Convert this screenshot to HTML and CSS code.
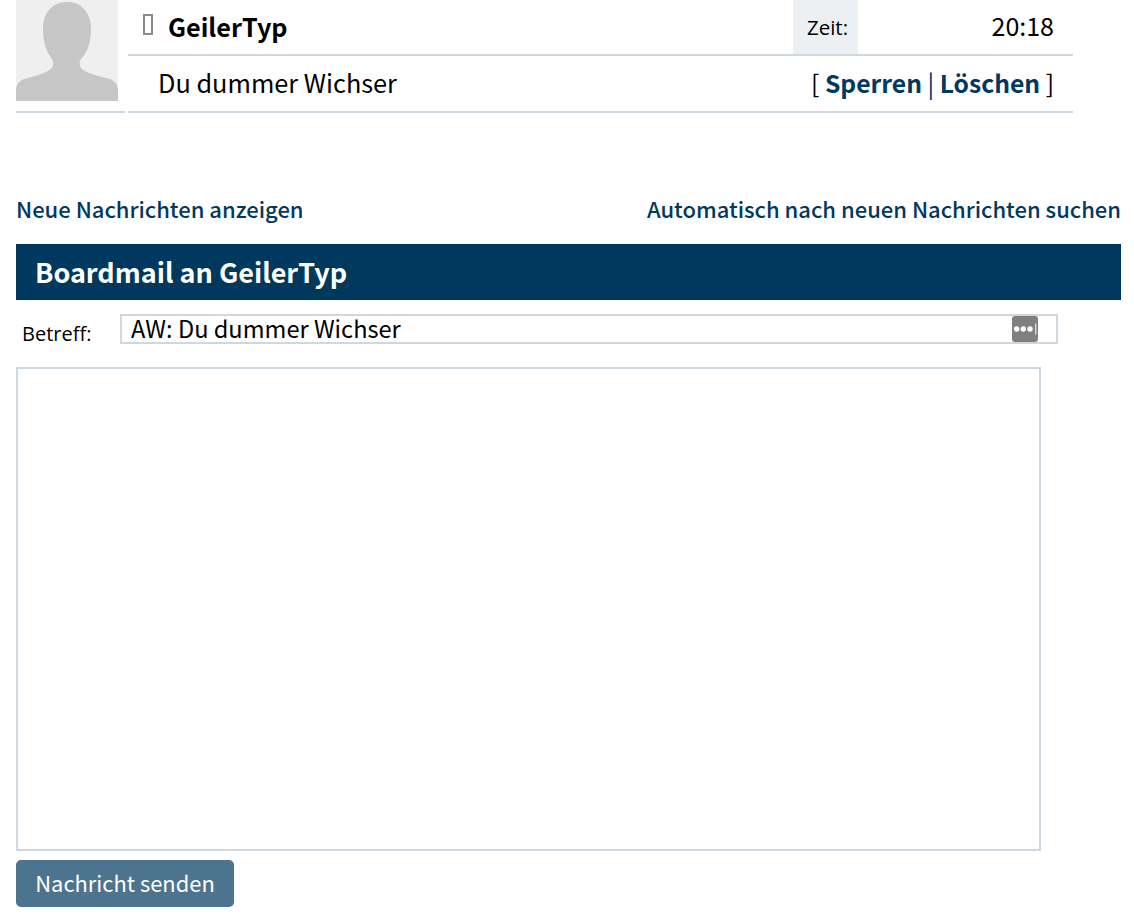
FILE: index.html
```html
<!DOCTYPE html>
<html lang="de">
<head>
<meta charset="utf-8">
<title>Boardmail</title>
<link rel="stylesheet" href="styles.css">
</head>
<body>
<div class="page">
  <section class="message">
    <div class="avatar-col">
      <svg class="avatar" viewBox="0 0 102 101" aria-hidden="true">
        <rect width="102" height="101" fill="#efefef"/>
        <path fill="#c6c6c6" d="M51 2C37 2 27 12 27 29C27 43 31 53 36 59C38 62 38 66 35 69C28 74 16 77 8 79C3 81 0 85 0 91V101H102V91C102 85 99 81 94 79C86 77 72 74 66 69C63 66 63 62 65 59C71 53 75 43 75 29C75 12 65 2 51 2Z"/>
      </svg>
    </div>
    <div class="msg-main">
      <div class="row row-head">
        <div class="author"><span class="tofu"></span><strong>GeilerTyp</strong></div>
        <div class="time-label">Zeit:</div>
        <div class="time-value">20:18</div>
      </div>
      <div class="row row-body">
        <div class="text">Du dummer Wichser</div>
        <div class="actions">[ <a href="#">Sperren</a> <span class="sep">|</span> <a href="#">Löschen</a> ]</div>
      </div>
    </div>
  </section>

  <nav class="links">
    <a href="#">Neue Nachrichten anzeigen</a>
    <a href="#">Automatisch nach neuen Nachrichten suchen</a>
  </nav>

  <h2 class="bar">Boardmail an GeilerTyp</h2>

  <form class="form">
    <div class="subject-row">
      <label class="subject-label" for="subject">Betreff:</label>
      <div class="subject-box">
        <input id="subject" class="subject-input" type="text" value="AW: Du dummer Wichser">
        <svg class="dots" viewBox="0 0 26 26" aria-hidden="true">
          <rect width="26" height="26" rx="3" fill="#808080"/>
          <circle cx="4.7" cy="13" r="2.7" fill="#fff"/>
          <circle cx="11.3" cy="13" r="2.7" fill="#fff"/>
          <circle cx="18" cy="13" r="2.7" fill="#fff"/>
          <rect x="23.3" y="7.5" width="1" height="11" fill="#fff"/>
        </svg>
      </div>
    </div>
    <textarea class="body-input"></textarea>
    <button class="send" type="button">Nachricht senden</button>
  </form>
</div>
</body>
</html>
```
FILE: styles.css
```css
* { box-sizing: border-box; }
html, body { margin: 0; padding: 0; background: #fff; }
body {
  font-family: "Noto Sans CJK SC", "Noto Sans", sans-serif;
  color: #000;
}
a { color: #00395d; text-decoration: none; font-weight: 500; }
.page { padding: 0 13px 0 16px; }

.message { display: flex; align-items: flex-start; width: 1057px; }
.avatar-col { width: 109px; height: 113px; border-bottom: 2px solid #cdd8e0; flex: none; margin-right: 3px; }
.avatar { display: block; width: 102px; height: 101px; }
.msg-main { flex: 1; }
.row { display: flex; border-bottom: 2px solid #cdd8e0; }
.row-head { height: 56px; }
.row-body { height: 57px; align-items: center; justify-content: space-between; padding: 0 19px 3px 30px; font-size: 25.3px; line-height: 30px; }
.author { flex: 1; display: flex; align-items: center; padding-left: 15px; font-size: 25.2px; line-height: 30px; padding-bottom: 2px; }
.author strong { font-weight: 700; }
.tofu { width: 10px; height: 21px; border: 2px solid #8a8a8a; margin-right: 15px; margin-top: -4px; }
.time-label {
  width: 65px; background: #edf0f3; padding-left: 4px; text-align: center;
  font-family: "Open Sans", sans-serif; font-size: 20.5px; line-height: 54px;
}
.time-value { width: 215px; text-align: right; padding: 0 19px 0 0; font-size: 25px; line-height: 50px; }
.actions { font-size: 24.7px; }
.actions a { font-weight: 700; }
.sep { color: #002a70; }

.links { display: flex; justify-content: space-between; margin-top: 80px; font-size: 22px; line-height: 30px; }
.bar { margin: 21px 0 0; height: 56px; background: #00395d; color: #fff; font-size: 27px; font-weight: 700; line-height: 56px; padding: 0 0 2px 19px; }

.form { display: block; }
.subject-row { display: flex; align-items: flex-start; margin-top: 14px; }
.subject-label { width: 104px; padding: 6px 0 0 6px; font-family: "Open Sans", sans-serif; font-size: 20px; line-height: 28px; }
.subject-box { position: relative; width: 938px; height: 30px; border: 2px solid #cdd8e0; }
.subject-input { display: block; width: 100%; height: 100%; border: 0; padding: 0 40px 2px 9px; background: transparent; font: 400 23.6px/26px "Noto Sans CJK SC", sans-serif; color: #000; outline: 0; }
.dots { position: absolute; right: 18px; top: 0; width: 26px; height: 26px; }
.body-input { display: block; width: 1025px; height: 484px; margin-top: 19px; border: 2px solid #cdd8e0; padding: 4px; resize: none; outline: 0; background: #fff; }
.send { display: block; width: 218px; height: 47px; margin-top: 9px; padding: 0 0 2px; border: 0; border-radius: 5px; background: #4d748f; color: #fff; font: 400 21.9px/30px "Noto Sans CJK SC", sans-serif; }
```
